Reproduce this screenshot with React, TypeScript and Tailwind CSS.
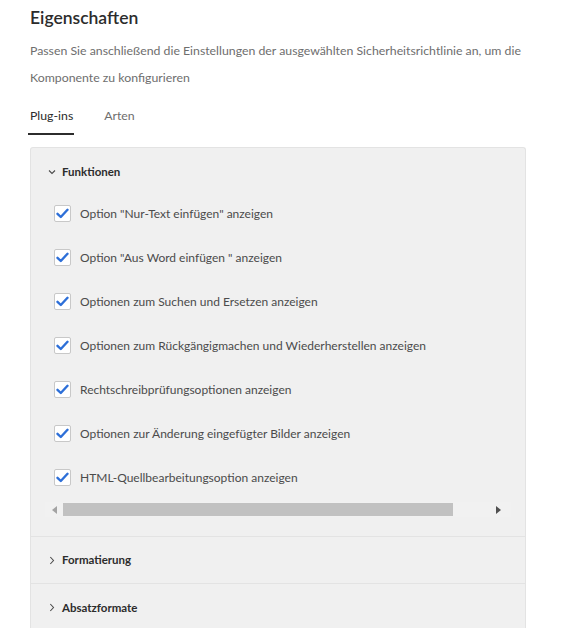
import React from "react";

const items = [
  'Option "Nur-Text einfügen" anzeigen',
  'Option "Aus Word einfügen " anzeigen',
  "Optionen zum Suchen und Ersetzen anzeigen",
  "Optionen zum Rückgängigmachen und Wiederherstellen anzeigen",
  "Rechtschreibprüfungsoptionen anzeigen",
  "Optionen zur Änderung eingefügter Bilder anzeigen",
  "HTML-Quellbearbeitungsoption anzeigen",
];

function Check() {
  return (
    <span className="flex h-[17px] w-[17px] shrink-0 items-center justify-center rounded-[2px] border border-[#c8c8c8] bg-white">
      <svg width="13" height="11" viewBox="0 0 13 11">
        <path d="M1.5 5.8 L4.8 9 L11.5 1.8" fill="none" stroke="#2d6fd8" strokeWidth="2.4" strokeLinecap="round" strokeLinejoin="round" />
      </svg>
    </span>
  );
}

function ChevronDown() {
  return (
    <svg width="8" height="6" viewBox="0 0 8 6">
      <path d="M1 1.5 L4 4.5 L7 1.5" fill="none" stroke="#4b4b4b" strokeWidth="1.1" />
    </svg>
  );
}

function ChevronRight() {
  return (
    <svg width="6" height="9" viewBox="0 0 6 9">
      <path d="M1.3 1 L4.5 4.5 L1.3 8" fill="none" stroke="#4b4b4b" strokeWidth="1.1" />
    </svg>
  );
}

export default function App() {
  return (
    <div className="min-h-[628px] bg-white pl-[30px] pr-[37px] pt-[6px]" style={{ fontFamily: "Lato, 'Open Sans', sans-serif" }}>
      <h1 className="text-[17.5px] leading-[24px] font-semibold text-[#2c2c2c]">Eigenschaften</h1>
      <p className="mr-[-30px] mt-[7px] text-[12.3px] leading-[27px] text-[#6e6e6e]">
        Passen Sie anschließend die Einstellungen der ausgewählten Sicherheitsrichtlinie an, um die
        <br />
        Komponente zu konfigurieren
      </p>
      <div className="mt-[15px] flex gap-[31px] text-[12.3px] leading-[20px]">
        <div className="relative pb-[8px] text-[#2c2c2c]">
          Plug-ins
          <span className="absolute bottom-[-1px] left-[-2px] right-[-1px] h-[2px] bg-[#2c2c2c]" />
        </div>
        <div className="text-[#6e6e6e]">Arten</div>
      </div>
      <div className="mt-[13px] rounded-t-[3px] border border-b-0 border-[#e3e3e3] bg-[#f0f0f0]">
        <div className="border-b border-[#e3e3e3] pb-[19px]">
          <div className="flex h-[48px] items-center gap-[6px] pl-[17px] text-[11.5px] font-bold text-[#2c2c2c]">
            <ChevronDown />
            <span>Funktionen</span>
          </div>
          <div className="flex flex-col gap-[27px] pl-[23px] pt-[9px]">
            {items.map((t) => (
              <div key={t} className="flex h-[17px] items-center gap-[9px] text-[12px] text-[#4b4b4b]">
                <Check />
                <span className="whitespace-nowrap">{t}</span>
              </div>
            ))}
          </div>
          <div className="mx-[14px] mt-[16px] flex h-[15px] items-center bg-[#f1f1f1]">
            <div className="flex w-[18px] justify-center">
              <svg width="5" height="8" viewBox="0 0 5 8"><path d="M5 0 L0 4 L5 8 Z" fill="#a3a3a3" /></svg>
            </div>
            <div className="h-[13px] w-[390px] bg-[#c1c1c1]" />
            <div className="flex flex-1 justify-end pr-[10px]">
              <svg width="5" height="8" viewBox="0 0 5 8"><path d="M0 0 L5 4 L0 8 Z" fill="#505050" /></svg>
            </div>
          </div>
        </div>
        <div className="flex h-[47px] items-center gap-[7px] border-b border-[#e3e3e3] pl-[18px] text-[11.5px] font-bold text-[#2c2c2c]">
          <ChevronRight />
          <span>Formatierung</span>
        </div>
        <div className="flex h-[47px] items-center gap-[7px] pl-[18px] text-[11.5px] font-bold text-[#2c2c2c]">
          <ChevronRight />
          <span>Absatzformate</span>
        </div>
      </div>
    </div>
  );
}
